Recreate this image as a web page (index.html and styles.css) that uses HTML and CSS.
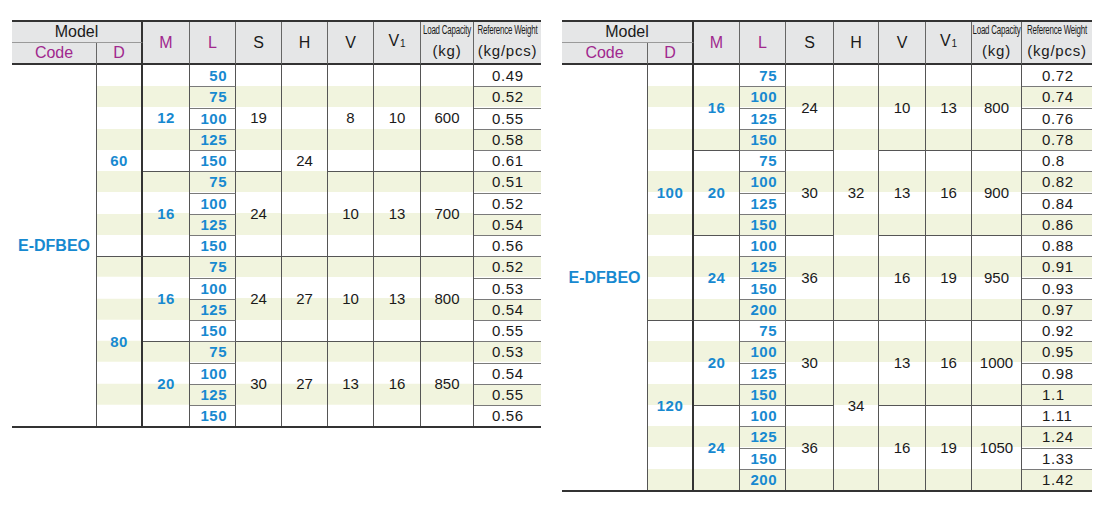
FILE: index.html
```html
<!DOCTYPE html>
<html lang="en">
<head>
<meta charset="utf-8">
<title>E-DFBEO specifications</title>
<link rel="stylesheet" href="styles.css">
</head>
<body>
<div class="page">
  <table class="spec spec-a">
    <colgroup>
      <col class="c-code"><col class="c-d"><col class="c-m"><col class="c-l"><col class="c-s"><col class="c-h"><col class="c-v"><col class="c-v1"><col class="c-cap"><col class="c-w">
    </colgroup>
    <thead>
      <tr class="h1">
        <th colspan="2" class="model">Model</th>
        <th rowspan="2" class="p">M</th>
        <th rowspan="2" class="p">L</th>
        <th rowspan="2">S</th>
        <th rowspan="2">H</th>
        <th rowspan="2">V</th>
        <th rowspan="2">V<sub>1</sub></th>
        <th rowspan="2" class="cap"><span class="tiny">Load Capacity</span><span class="unit">(kg)</span></th>
        <th rowspan="2" class="cap w"><span class="tiny">Reference Weight</span><span class="unit">(kg/pcs)</span></th>
      </tr>
      <tr class="h2">
        <th class="p">Code</th>
        <th class="p d">D</th>
      </tr>
    </thead>
    <tbody>
      <tr><td rowspan="17" class="code">E-DFBEO</td><td rowspan="9" class="b d">60</td><td rowspan="5" class="b">12</td><td class="l">50</td><td rowspan="5">19</td><td rowspan="9">24</td><td rowspan="5">8</td><td rowspan="5">10</td><td rowspan="5">600</td><td class="w">0.49</td></tr>
      <tr><td class="l">75</td><td class="w">0.52</td></tr>
      <tr><td class="l">100</td><td class="w">0.55</td></tr>
      <tr><td class="l">125</td><td class="w">0.58</td></tr>
      <tr><td class="l">150</td><td class="w">0.61</td></tr>
      <tr><td rowspan="4" class="b">16</td><td class="l">75</td><td rowspan="4">24</td><td rowspan="4">10</td><td rowspan="4">13</td><td rowspan="4">700</td><td class="w">0.51</td></tr>
      <tr><td class="l">100</td><td class="w">0.52</td></tr>
      <tr><td class="l">125</td><td class="w">0.54</td></tr>
      <tr><td class="l">150</td><td class="w">0.56</td></tr>
      <tr><td rowspan="8" class="b d">80</td><td rowspan="4" class="b">16</td><td class="l">75</td><td rowspan="4">24</td><td rowspan="4">27</td><td rowspan="4">10</td><td rowspan="4">13</td><td rowspan="4">800</td><td class="w">0.52</td></tr>
      <tr><td class="l">100</td><td class="w">0.53</td></tr>
      <tr><td class="l">125</td><td class="w">0.54</td></tr>
      <tr><td class="l">150</td><td class="w">0.55</td></tr>
      <tr><td rowspan="4" class="b">20</td><td class="l">75</td><td rowspan="4">30</td><td rowspan="4">27</td><td rowspan="4">13</td><td rowspan="4">16</td><td rowspan="4">850</td><td class="w">0.53</td></tr>
      <tr><td class="l">100</td><td class="w">0.54</td></tr>
      <tr><td class="l">125</td><td class="w">0.55</td></tr>
      <tr><td class="l">150</td><td class="w">0.56</td></tr>
    </tbody>
  </table>

  <table class="spec spec-b">
    <colgroup>
      <col class="c-code"><col class="c-d"><col class="c-m"><col class="c-l"><col class="c-s"><col class="c-h"><col class="c-v"><col class="c-v1"><col class="c-cap"><col class="c-w">
    </colgroup>
    <thead>
      <tr class="h1">
        <th colspan="2" class="model">Model</th>
        <th rowspan="2" class="p">M</th>
        <th rowspan="2" class="p">L</th>
        <th rowspan="2">S</th>
        <th rowspan="2">H</th>
        <th rowspan="2">V</th>
        <th rowspan="2">V<sub>1</sub></th>
        <th rowspan="2" class="cap"><span class="tiny">Load Capacity</span><span class="unit">(kg)</span></th>
        <th rowspan="2" class="cap w"><span class="tiny">Reference Weight</span><span class="unit">(kg/pcs)</span></th>
      </tr>
      <tr class="h2">
        <th class="p">Code</th>
        <th class="p d">D</th>
      </tr>
    </thead>
    <tbody>
      <tr><td rowspan="20" class="code">E-DFBEO</td><td rowspan="12" class="b d">100</td><td rowspan="4" class="b">16</td><td class="l">75</td><td rowspan="4">24</td><td rowspan="12">32</td><td rowspan="4">10</td><td rowspan="4">13</td><td rowspan="4">800</td><td class="w">0.72</td></tr>
      <tr><td class="l">100</td><td class="w">0.74</td></tr>
      <tr><td class="l">125</td><td class="w">0.76</td></tr>
      <tr><td class="l">150</td><td class="w">0.78</td></tr>
      <tr><td rowspan="4" class="b">20</td><td class="l">75</td><td rowspan="4">30</td><td rowspan="4">13</td><td rowspan="4">16</td><td rowspan="4">900</td><td class="w">0.8</td></tr>
      <tr><td class="l">100</td><td class="w">0.82</td></tr>
      <tr><td class="l">125</td><td class="w">0.84</td></tr>
      <tr><td class="l">150</td><td class="w">0.86</td></tr>
      <tr><td rowspan="4" class="b">24</td><td class="l">100</td><td rowspan="4">36</td><td rowspan="4">16</td><td rowspan="4">19</td><td rowspan="4">950</td><td class="w">0.88</td></tr>
      <tr><td class="l">125</td><td class="w">0.91</td></tr>
      <tr><td class="l">150</td><td class="w">0.93</td></tr>
      <tr><td class="l">200</td><td class="w">0.97</td></tr>
      <tr><td rowspan="8" class="b d">120</td><td rowspan="4" class="b">20</td><td class="l">75</td><td rowspan="4">30</td><td rowspan="8">34</td><td rowspan="4">13</td><td rowspan="4">16</td><td rowspan="4">1000</td><td class="w">0.92</td></tr>
      <tr><td class="l">100</td><td class="w">0.95</td></tr>
      <tr><td class="l">125</td><td class="w">0.98</td></tr>
      <tr><td class="l">150</td><td class="w">1.1</td></tr>
      <tr><td rowspan="4" class="b">24</td><td class="l">100</td><td rowspan="4">36</td><td rowspan="4">16</td><td rowspan="4">19</td><td rowspan="4">1050</td><td class="w">1.11</td></tr>
      <tr><td class="l">125</td><td class="w">1.24</td></tr>
      <tr><td class="l">150</td><td class="w">1.33</td></tr>
      <tr><td class="l">200</td><td class="w">1.42</td></tr>
    </tbody>
  </table>
</div>
</body>
</html>
```
FILE: styles.css
```css
html, body {
  margin: 0;
  padding: 0;
  background: #ffffff;
}

body {
  font-family: "Liberation Sans", Arial, sans-serif;
  color: #1a1a1a;
}

.page {
  display: flex;
  align-items: flex-start;
  gap: 21px;
  padding: 20px 0 0 12px;
}

.spec {
  border-collapse: separate;
  border-spacing: 0;
  table-layout: fixed;
  border-top: 2px solid #333333;
  border-bottom: 2px solid #333333;
}

.spec-a { width: 529px; }
.spec-b { width: 530px; }

.spec-a .c-code { width: 85px; }
.spec-a .c-d { width: 46px; }
.spec-a .c-m { width: 47px; }
.spec-a .c-l { width: 46px; }
.spec-a .c-s { width: 46px; }
.spec-a .c-h { width: 46px; }
.spec-a .c-v { width: 46px; }
.spec-a .c-v1 { width: 47px; }
.spec-a .c-cap { width: 53px; }
.spec-a .c-w { width: 67px; }

.spec-b .c-code { width: 86px; }
.spec-b .c-d { width: 46px; }
.spec-b .c-m { width: 46px; }
.spec-b .c-l { width: 46px; }
.spec-b .c-s { width: 48px; }
.spec-b .c-h { width: 45px; }
.spec-b .c-v { width: 47px; }
.spec-b .c-v1 { width: 46px; }
.spec-b .c-cap { width: 50px; }
.spec-b .c-w { width: 70px; }

/* header */
.spec th {
  background: #e5e6e7;
  font-weight: normal;
  font-size: 16px;
  line-height: 18px;
  color: #1a1a1a;
  padding: 0;
  text-align: center;
  vertical-align: middle;
  border-right: 1px solid #666666;
  border-bottom: 2px solid #333333;
  overflow: visible;
}

.spec .h1 { height: 21px; }
.spec .h2 { height: 22px; }

.spec th.model {
  border-bottom: 1px solid #9a9a9a;
  border-right: 2px solid #333333;
}

.spec th.d,
.spec td.d {
  border-right: 2px solid #333333;
}

.spec th.p {
  color: #a0288e;
}

.spec th sub {
  font-size: 10px;
  vertical-align: -1px;
  margin-left: 1px;
}

.spec th.cap {
  vertical-align: top;
  padding-top: 1px;
}

.tiny {
  display: block;
  margin: 0 -30px;
  font-size: 12px;
  line-height: 14px;
  white-space: nowrap;
  letter-spacing: -0.3px;
  transform: scaleX(0.66);
  transform-origin: 50% 50%;
}

.unit {
  display: block;
  margin-top: 5px;
  font-size: 15px;
  line-height: 17px;
  letter-spacing: 0.8px;
  white-space: nowrap;
}

.spec th.w,
.spec td.w {
  border-right: none;
}

/* body */
.spec tbody {
  background: repeating-linear-gradient(to bottom, #ffffff 0, #ffffff 21.25px, #f1f4de 21.25px, #f1f4de 42.5px);
}

.spec tbody tr {
  height: 21.25px;
}

.spec td {
  padding: 0;
  text-align: center;
  vertical-align: middle;
  font-size: 15px;
  line-height: 16px;
  color: #1a1a1a;
  border-right: 1px solid #555555;
  border-top: 1px solid #555555;
  white-space: nowrap;
}

.spec tbody tr:first-child td {
  border-top: none;
}

.spec td.code {
  background: #ffffff;
  color: #1789d0;
  font-weight: bold;
  font-size: 16px;
}

.spec td.b {
  color: #1789d0;
  font-weight: bold;
  letter-spacing: 0.5px;
}

.spec td.l {
  color: #1789d0;
  font-weight: bold;
  text-align: right;
  padding-right: 8px;
  letter-spacing: 0.5px;
  border-top-color: #7a7a7a;
}

.spec td.w {
  text-align: left;
  padding-left: 18px;
  letter-spacing: 0.6px;
  border-top-color: #7a7a7a;
}

.spec-b td.w {
  padding-left: 20px;
}
```
